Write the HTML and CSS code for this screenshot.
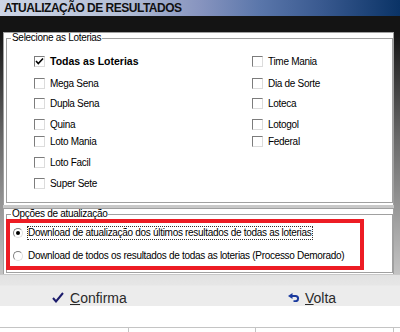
FILE: index.html
```html
<!DOCTYPE html>
<html lang="pt">
<head>
<meta charset="utf-8">
<title>Atualização de Resultados</title>
<link rel="stylesheet" href="styles.css">
</head>
<body>
<div class="titlebar">ATUALIZAÇÃO DE RESULTADOS</div>
<div class="darkband"></div>
<div class="main">
  <div class="panel panel-top">
    <fieldset class="group group-lot">
      <legend>Selecione as Loterias</legend>
      <div class="lot-grid">
        <label class="chk"><span class="box checked"><svg viewBox="0 0 11 11" width="11" height="11"><path d="M2 5 L4.3 7.5 L9 2.5" fill="none" stroke="#000" stroke-width="1.6"/></svg></span><span class="bold">Todas as Loterias</span></label>
        <label class="chk"><span class="box"></span><span>Mega Sena</span></label>
        <label class="chk"><span class="box"></span><span>Dupla Sena</span></label>
        <label class="chk"><span class="box"></span><span>Quina</span></label>
        <label class="chk"><span class="box"></span><span>Loto Mania</span></label>
        <label class="chk"><span class="box"></span><span>Loto Facil</span></label>
        <label class="chk"><span class="box"></span><span>Super Sete</span></label>
        <label class="chk"><span class="box"></span><span>Time Mania</span></label>
        <label class="chk"><span class="box"></span><span>Dia de Sorte</span></label>
        <label class="chk"><span class="box"></span><span>Loteca</span></label>
        <label class="chk"><span class="box"></span><span>Lotogol</span></label>
        <label class="chk"><span class="box"></span><span>Federal</span></label>
      </div>
    </fieldset>
  </div>
  <div class="sep"></div>
  <div class="panel panel-opt">
    <fieldset class="group group-opt">
      <legend>Opções de atualização</legend>
      <div class="opt-list">
        <label class="rad"><span class="radio on"></span><span class="focus">Download de atualização dos últimos resultados de todas as loterias</span></label>
        <label class="rad"><span class="radio"></span><span class="txt">Download de todos os resultados de todas as loterias (Processo Demorado)</span></label>
      </div>
    </fieldset>
    <div class="highlight"></div>
  </div>
</div>
<div class="footer">
  <div class="btn btn-ok">
    <svg class="ico" viewBox="0 0 12 11" width="12" height="11"><path d="M1 6 L4 9.5 L11 1" fill="none" stroke="#1c1c6c" stroke-width="2"/></svg>
    <span><u>C</u>onfirma</span>
  </div>
  <div class="btn btn-back">
    <svg class="ico" viewBox="0 0 12 9" width="12" height="9"><polygon points="0,3 4.5,0 4.5,6" fill="#1a3a9e"/><path d="M4 3 H7.5 A2.6 2.6 0 0 1 7.5 8.2 H5.5" fill="none" stroke="#1a3a9e" stroke-width="2"/></svg>
    <span><u>V</u>olta</span>
  </div>
</div>
<div class="status">
  <div class="status-fill"></div>
  <div class="status-bar">
    <div class="seg seg1"></div>
    <div class="seg seg2"></div>
    <div class="seg seg3"></div>
  </div>
</div>
</body>
</html>
```
FILE: styles.css
```css
html, body {
  margin: 0;
  padding: 0;
}
body {
  width: 400px;
  height: 332px;
  overflow: hidden;
  background: linear-gradient(to bottom, #141414 0px, #141414 32px, #6a6a6a 140px, #c4c4c4 275px);
  font-family: "Liberation Sans", Arial, sans-serif;
  font-size: 10px;
  letter-spacing: -0.3px;
  color: #000;
}
.titlebar {
  height: 16px;
  line-height: 17px;
  padding-left: 4px;
  font-weight: bold;
  font-size: 12px;
  letter-spacing: -0.5px;
  color: #101010;
  background: linear-gradient(to right, #cdd5e6 0%, #b4bfd6 30%, #8794bf 50%, #5a76aa 65%, #3a5a90 80%, #0a3366 100%);
}
.darkband {
  height: 16px;
  background: #141414;
}
.main {
  padding: 0 6px 0 3px;
}
.panel {
  position: relative;
  background: #fff;
  border: 1px solid #a0a0a0;
  border-bottom: none;
  box-sizing: border-box;
}
.panel-top {
  height: 173px;
}
.sep {
  height: 3px;
  background: #c9c9c9;
}
.panel-opt {
  height: 66px;
}
.group {
  margin: 0 0 0 2px;
  padding: 0;
  border: 1px solid #a0a0a0;
  box-sizing: border-box;
  min-width: 0;
}
.group legend {
  padding: 0 1px;
  margin-left: 4px;
  line-height: 10px;
}
.group-lot {
  height: 170px;
}
.lot-grid {
  display: grid;
  grid-template-columns: 218px 1fr;
  grid-template-rows: 22px 20px 21px 17px 21px 21px 18px;
  grid-auto-flow: column;
  padding: 9px 0 0 27px;
}
.chk {
  display: flex;
  align-items: center;
  gap: 5px;
  height: 18px;
}
.bold {
  font-weight: bold;
  font-size: 10.5px;
  letter-spacing: 0;
}
.box {
  width: 11px;
  height: 11px;
  box-sizing: border-box;
  background: #fff;
  border-top: 1px solid #7c7c7c;
  border-left: 1px solid #7c7c7c;
  border-right: 1px solid #dcdcdc;
  border-bottom: 1px solid #dcdcdc;
  display: flex;
  align-items: center;
  justify-content: center;
}
.box svg {
  display: block;
  flex: none;
}
.group-opt {
  height: 64px;
}
.opt-list {
  display: flex;
  flex-direction: column;
  gap: 9px;
  padding: 7px 0 0 6px;
}
.rad {
  display: flex;
  align-items: center;
  gap: 5px;
  height: 14px;
}
.radio {
  width: 10px;
  height: 10px;
  box-sizing: border-box;
  border-radius: 50%;
  border: 1px solid;
  border-color: #808080 #e0e0e0 #e0e0e0 #808080;
  background: #fff;
  display: flex;
  align-items: center;
  justify-content: center;
}
.radio.on::after {
  content: "";
  width: 4px;
  height: 4px;
  border-radius: 50%;
  background: #000;
}
.focus {
  border: 1px dotted #333;
  padding: 0 1px 0 0;
  margin-left: -1px;
  line-height: 12px;
}
.txt {
  line-height: 12px;
}
.highlight {
  position: absolute;
  left: 2px;
  top: 10px;
  width: 358px;
  height: 51px;
  box-sizing: border-box;
  border: 4px solid #ed1c24;
}
.footer {
  height: 32px;
  box-sizing: border-box;
  border-top: 1px solid #c8c8c8;
  background: linear-gradient(to bottom, #e2e2e2 0px, #e6e6e6 10px, #ececec 11px, #ececec 100%);
  display: flex;
  align-items: center;
  padding-top: 14px;
  font-size: 14px;
  letter-spacing: 0;
  color: #2a2a2a;
}
.btn {
  display: flex;
  align-items: center;
  gap: 6px;
  line-height: 14px;
}
.btn-ok {
  width: 288px;
  box-sizing: border-box;
  padding-left: 52px;
}
.btn-back {
  gap: 5px;
}
.ico {
  display: block;
  flex: none;
}
.status {
  height: 26px;
  background: #fff;
  display: flex;
  flex-direction: column;
}
.status-fill {
  height: 21px;
}
.status-bar {
  flex: 1;
  border-top: 1px solid #c4c4c4;
  display: flex;
}
.seg {
  border-right: 1px solid #c4c4c4;
  box-sizing: border-box;
}
.seg1 { width: 129px; }
.seg2 { width: 127px; }
.seg3 { width: 138px; }
```
